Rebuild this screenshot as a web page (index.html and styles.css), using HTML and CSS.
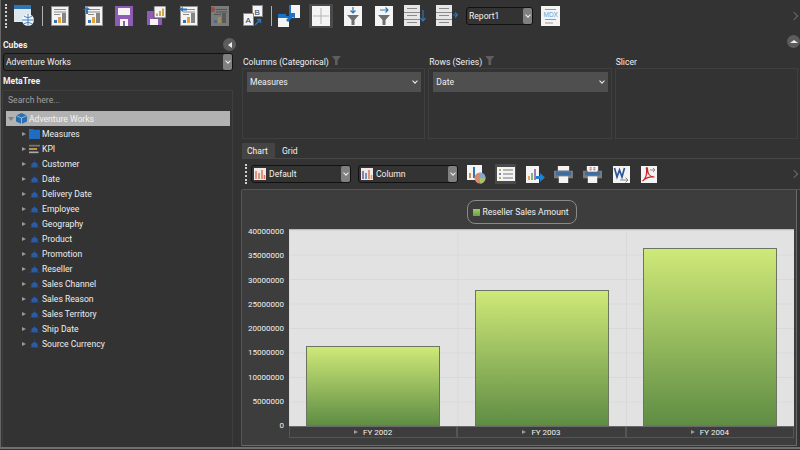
FILE: index.html
```html
<!DOCTYPE html>
<html lang="en">

<head>
    <meta charset="UTF-8">
    <title>Report</title>
    <link rel="stylesheet" href="styles.css">
</head>

<body>
    <svg class="defs" width="0" height="0">
        <symbol id="report" viewBox="0 0 18 20">
            <rect x=".5" y=".5" width="17" height="19" fill="#f4f4f4" stroke="#8f8f8f"/>
            <path d="M3 3.500h12M3 6h12M3 8.500h6" stroke="#8a8a8a" fill="none"/>
            <rect x="3" y="14" width="3" height="3" fill="#2f74b5"/>
            <rect x="7" y="11" width="3" height="6" fill="#e8a33c"/>
            <rect x="11" y="7" width="4" height="10" fill="#858585"/>
        </symbol>
        <symbol id="dim" viewBox="0 0 14 12">
            <path d="M0 10.500h14M7 0v4" stroke="#24426f" fill="none"/>
            <path d="M7 3l4 3v4H3V6z" fill="#2d5ba3"/>
        </symbol>
        <symbol id="funnel" viewBox="0 0 18 20">
            <path d="M3 9h12l-4.500 5v5h-3v-5z" fill="#6f6f6f"/>
        </symbol>
        <symbol id="rows" viewBox="0 0 16 21">
            <rect width="16" height="21" fill="#e6e6e6"/>
            <path d="M0 7.500h16M0 14.500h16M3 3.500h10M3 10.500h10M3 17.500h10" stroke="#8a8a8a" fill="none"/>
        </symbol>
        <symbol id="printer" viewBox="0 0 20 18">
            <rect x="4" width="12" height="5" fill="#f4f4f4"/>
            <rect y="5" width="20" height="8" fill="#7d7d7d"/>
            <rect x="2" y="6" width="16" height="4" fill="#3f6d9c"/>
            <rect x="5" y="11" width="10" height="7" fill="#f4f4f4"/>
        </symbol>
    </svg>

    <div class="app">
        <div class="toolbar">
            <span class="grip"></span>
            <button class="tool tool-first">
                <svg width="20" height="21" viewBox="0 0 20 21">
                    <rect width="17" height="17" fill="#dfe7ef"/>
                    <rect width="17" height="4" fill="#2f74b5"/>
                    <circle cx="14" cy="15" r="6" fill="#f4f6f8"/>
                    <path d="M8 15h12M14 9v12M10 11c3 2 5 2 8 0M10 19c3-2 5-2 8 0" stroke="#3f84c5" fill="none"/>
                </svg>
            </button>
            <span class="tool-sep"></span>
            <button class="tool"><svg width="18" height="20"><use href="#report"/></svg></button>
            <button class="tool">
                <svg width="20" height="20" viewBox="0 0 20 20">
                    <use href="#report" x="2" width="18" height="20"/>
                    <path d="M0 4l4-3 4 3H5v4H3V4z" fill="#2f74b5"/>
                </svg>
            </button>
            <button class="tool">
                <svg width="18" height="20" viewBox="0 0 18 20">
                    <path d="M0 0h18v20H0z" fill="#8e5bb5"/>
                    <rect x="3" y="2" width="12" height="7" fill="#f4f4f4"/>
                    <rect x="5" y="13" width="8" height="7" fill="#f4f4f4"/>
                    <rect x="8" y="15" width="2" height="5" fill="#8e5bb5"/>
                </svg>
            </button>
            <button class="tool">
                <svg width="19" height="19" viewBox="0 0 19 19">
                    <path d="M0 5h15v14H0z" fill="#8e5bb5"/>
                    <rect x="3" y="13" width="8" height="6" fill="#f4f4f4"/>
                    <rect x="7" y="0" width="12" height="12" fill="#f4f4f4" stroke="#555"/>
                    <path d="M10 10V7.500M13 10V5M16 10V2.500" stroke="#c9962f" stroke-width="1.700"/>
                </svg>
            </button>
            <button class="tool">
                <svg width="20" height="20" viewBox="0 0 20 20">
                    <use href="#report" x="1" width="18" height="20"/>
                    <path d="M0 3l4-2v1.500h4v2H4V6z" fill="#2f74b5"/>
                </svg>
            </button>
            <button class="tool">
                <svg width="18" height="20" viewBox="0 0 18 20">
                    <rect width="18" height="20" fill="#7b7b7b"/>
                    <path d="M5 3.500h11M5 6h11M3 8.500h7" stroke="#555" fill="none"/>
                    <rect x="3" y="14" width="3" height="3" fill="#4c6a85"/>
                    <rect x="7" y="11" width="3" height="6" fill="#a08a62"/>
                    <rect x="11" y="7" width="4" height="10" fill="#5a5a5a"/>
                    <circle cx="1.500" cy="3.500" r="2.500" fill="#a04a44"/>
                </svg>
            </button>
            <button class="tool tool-28">
                <svg width="20" height="21" viewBox="0 0 20 21">
                    <rect x="9.500" y=".5" width="10" height="11" fill="#f4f4f4" stroke="#888"/>
                    <rect x=".5" y="8.500" width="10" height="12" fill="#f4f4f4" stroke="#888"/>
                    <text x="11.500" y="9.500" class="swap-text">B</text>
                    <text x="2.500" y="18" class="swap-text">A</text>
                    <path d="M12 20l5-5M14 14.500h3.500V18" stroke="#2f74b5" stroke-width="1.500" fill="none"/>
                </svg>
            </button>
            <span class="tool-sep tool-sep-right"></span>
            <button class="tool tool-31">
                <svg width="22" height="22" viewBox="0 0 22 22">
                    <rect x="11" y="0" width="11" height="13" fill="#f4f4f4"/>
                    <rect x="0" y="11" width="11" height="11" fill="#f4f4f4"/>
                    <path d="M0 9h8v2h3V0h2v13H0z" fill="#1c72c4"/>
                    <path d="M8 15l5-5-2-2h6v6l-2-2-5 5z" fill="#1c72c4"/>
                </svg>
            </button>
            <button class="tool tool-active">
                <svg width="18" height="20" viewBox="0 0 18 20">
                    <rect width="18" height="20" fill="#f4f4f4"/>
                    <path d="M9 2v16M1 10h16" stroke="#b5b5b5" fill="none"/>
                </svg>
            </button>
            <button class="tool tool-31">
                <svg width="18" height="20" viewBox="0 0 18 20">
                    <rect width="18" height="20" fill="#f4f4f4"/>
                    <use href="#funnel" width="18" height="20"/>
                    <path d="M9 1v6M6.500 4.500L9 7l2.500-2.500" stroke="#2f74b5" stroke-width="1.200" fill="none"/>
                </svg>
            </button>
            <button class="tool tool-29">
                <svg width="18" height="20" viewBox="0 0 18 20">
                    <rect width="18" height="20" fill="#f4f4f4"/>
                    <use href="#funnel" width="18" height="20"/>
                    <path d="M5 4h8M10.500 1.500L13 4l-2.500 2.500" stroke="#2f74b5" stroke-width="1.200" fill="none"/>
                </svg>
            </button>
            <button class="tool">
                <svg width="22" height="21" viewBox="0 0 22 21">
                    <use href="#rows" width="16" height="21"/>
                    <path d="M19 5v11M16.500 13l2.500 3 2.500-3" stroke="#2f74b5" stroke-width="1.200" fill="none"/>
                </svg>
            </button>
            <button class="tool tool-30">
                <svg width="22" height="21" viewBox="0 0 22 21">
                    <use href="#rows" width="16" height="21"/>
                    <path d="M17 10h4.500M19 7.500l2.500 2.500-2.500 2.500" stroke="#2f74b5" stroke-width="1.200" fill="none"/>
                </svg>
            </button>
            <div class="combo combo-report">
                <span class="combo-text">Report1</span>
                <span class="combo-btn"><span class="chev"></span></span>
            </div>
            <button class="tool tool-mdx">
                <svg width="19" height="20" viewBox="0 0 19 20">
                    <rect width="19" height="20" fill="#f4f4f4"/>
                    <text x="2.500" y="10.500" class="mdx-text">MDX</text>
                    <path d="M4 3.500h11M4 13.500h11M4 17h8" stroke="#9a9a9a" fill="none"/>
                </svg>
            </button>
            <span class="more"></span>
        </div>

        <div class="main">
            <aside class="side">
                <div class="side-head">
                    <span class="title">Cubes</span>
                    <span class="round-btn round-btn-left"><span class="tri-left"></span></span>
                </div>
                <div class="combo combo-cube">
                    <span class="combo-text">Adventure Works</span>
                    <span class="combo-btn"><span class="chev"></span></span>
                </div>
                <div class="title meta-title">MetaTree</div>
                <div class="tree-panel">
                    <div class="search">Search here...</div>
                    <div class="tree-root">
                        <span class="tri-open"></span>
                        <svg width="11" height="11" viewBox="0 0 11 11">
                            <path d="M5.500 0L11 2.500V8.500L5.500 11 0 8.500V2.500z" fill="#2c6fb0"/>
                            <path d="M0 2.500l5.500 2.500L11 2.500M5.500 5v6" stroke="#c4d4e4" stroke-width=".7" fill="none"/>
                        </svg>
                        Adventure Works
                    </div>
                    <ul class="tree">
                        <li><span class="tri"></span><svg width="11" height="10" viewBox="0 0 15 12" preserveAspectRatio="none"><path d="M0 0h6v1h9v11H0z" fill="#1f6cc0"/></svg>Measures</li>
                        <li><span class="tri"></span><svg width="11" height="10" viewBox="0 0 15 12" preserveAspectRatio="none"><rect y="1" width="15" height="2" fill="#777"/><rect y="5" width="11" height="2" fill="#d8a650"/><rect y="9" width="13" height="2" fill="#aaa"/></svg>KPI</li>
                        <li><span class="tri"></span><svg width="11" height="10"><use href="#dim"/></svg>Customer</li>
                        <li><span class="tri"></span><svg width="11" height="10"><use href="#dim"/></svg>Date</li>
                        <li><span class="tri"></span><svg width="11" height="10"><use href="#dim"/></svg>Delivery Date</li>
                        <li><span class="tri"></span><svg width="11" height="10"><use href="#dim"/></svg>Employee</li>
                        <li><span class="tri"></span><svg width="11" height="10"><use href="#dim"/></svg>Geography</li>
                        <li><span class="tri"></span><svg width="11" height="10"><use href="#dim"/></svg>Product</li>
                        <li><span class="tri"></span><svg width="11" height="10"><use href="#dim"/></svg>Promotion</li>
                        <li><span class="tri"></span><svg width="11" height="10"><use href="#dim"/></svg>Reseller</li>
                        <li><span class="tri"></span><svg width="11" height="10"><use href="#dim"/></svg>Sales Channel</li>
                        <li><span class="tri"></span><svg width="11" height="10"><use href="#dim"/></svg>Sales Reason</li>
                        <li><span class="tri"></span><svg width="11" height="10"><use href="#dim"/></svg>Sales Territory</li>
                        <li><span class="tri"></span><svg width="11" height="10"><use href="#dim"/></svg>Ship Date</li>
                        <li><span class="tri"></span><svg width="11" height="10"><use href="#dim"/></svg>Source Currency</li>
                    </ul>
                </div>
            </aside>

            <section class="content">
                <div class="content-top">
                    <span class="round-btn"><span class="tri-up"></span></span>
                </div>
                <div class="axes">
                    <div class="axis">
                        <div class="axis-label">Columns (Categorical) <span class="filter"></span></div>
                        <div class="axis-box">
                            <div class="axis-item">Measures<span class="chev"></span></div>
                        </div>
                    </div>
                    <div class="axis">
                        <div class="axis-label">Rows (Series) <span class="filter"></span></div>
                        <div class="axis-box">
                            <div class="axis-item">Date<span class="chev"></span></div>
                        </div>
                    </div>
                    <div class="axis">
                        <div class="axis-label">Slicer</div>
                        <div class="axis-box"></div>
                    </div>
                </div>

                <div class="tabs">
                    <span class="tab tab-active">Chart</span>
                    <span class="tab">Grid</span>
                </div>

                <div class="chart-bar">
                    <span class="grip grip-small"></span>
                    <div class="combo combo-chart">
                        <svg width="12" height="12" viewBox="0 0 12 12"><rect width="12" height="12" fill="#f0e8e4"/><path d="M2 11V3M5 11V5M8 11V2M10.500 11V7" stroke="#d8785a" stroke-width="1.500"/></svg>
                        <span class="combo-text">Default</span>
                        <span class="combo-btn"><span class="chev"></span></span>
                    </div>
                    <div class="combo combo-chart">
                        <svg width="12" height="12" viewBox="0 0 12 12"><rect width="12" height="12" fill="#f0e8e4"/><path d="M2 11V3" stroke="#7a4fa0" stroke-width="1.500"/><path d="M5 11V5" stroke="#3d7cc0" stroke-width="1.500"/><path d="M8 11V2" stroke="#d8785a" stroke-width="1.500"/><path d="M10.500 11V7" stroke="#e0a040" stroke-width="1.500"/></svg>
                        <span class="combo-text">Column</span>
                        <span class="combo-btn"><span class="chev"></span></span>
                    </div>
                    <div class="chart-tools">
                        <button class="chart-tool tool-18">
                            <svg width="19" height="19" viewBox="0 0 19 19">
                                <rect width="15" height="15" fill="#f4f4f4"/>
                                <path d="M3 13V8" stroke="#e09030" stroke-width="2"/>
                                <path d="M7 13V2" stroke="#2f74b5" stroke-width="2"/>
                                <circle cx="13" cy="13" r="5.500" fill="#d88a70"/>
                                <path d="M13 13V7.500A5.500 5.500 0 0 1 18.500 13z" fill="#7aa8d8"/>
                                <path d="M13 13h5.500A5.500 5.500 0 0 1 13 18.500z" fill="#a8c070"/>
                            </svg>
                        </button>
                        <button class="chart-tool chart-tool-active">
                            <svg width="18" height="14" viewBox="0 0 18 14">
                                <rect width="18" height="14" fill="#f4f4f4"/>
                                <path d="M6 3h10M6 7h10M6 11h10" stroke="#777" stroke-width="1.200"/>
                                <rect x="2" y="2" width="2" height="2" fill="#a8c050"/>
                                <rect x="2" y="6" width="2" height="2" fill="#a06ab0"/>
                                <rect x="2" y="10" width="2" height="2" fill="#a8c050"/>
                            </svg>
                        </button>
                        <button class="chart-tool tool-18">
                            <svg width="19" height="17" viewBox="0 0 19 17">
                                <rect width="13" height="17" fill="#f4f4f4"/>
                                <path d="M3 14V10" stroke="#e09030" stroke-width="1.500"/>
                                <path d="M6 14V7" stroke="#60a040" stroke-width="1.500"/>
                                <path d="M9 14V3" stroke="#8a4fa8" stroke-width="1.500"/>
                                <path d="M10 10h4V7l5 4.500-5 4.500v-3h-4z" fill="#1c82d4"/>
                            </svg>
                        </button>
                        <button class="chart-tool"><svg width="19" height="17"><use href="#printer"/></svg></button>
                        <button class="chart-tool">
                            <svg width="19" height="17" viewBox="0 0 20 18">
                                <use href="#printer" width="20" height="18"/>
                                <rect x="5" width="10" height="6" fill="#f4f4f4"/>
                                <path d="M7 2h2M11 2h2M7 4h2M11 4h2" stroke="#d03030" fill="none"/>
                            </svg>
                        </button>
                        <button class="chart-tool chart-tool-export">
                            <svg width="17" height="17" viewBox="0 0 17 17">
                                <rect width="17" height="17" fill="#f4f4f4"/>
                                <path d="M1.500 2l2.500 9 2.500-7 2.500 7 2.500-9" stroke="#2a5699" stroke-width="1.700" fill="none"/>
                                <path d="M7 14h8M12.500 11.500L15 14l-2.500 2.500" stroke="#888" fill="none"/>
                            </svg>
                        </button>
                        <button class="chart-tool chart-tool-export">
                            <svg width="16" height="17" viewBox="0 0 16 17">
                                <rect width="16" height="17" fill="#f4f4f4"/>
                                <path d="M1.500 15c3-2 5-7 4-12-.5-2 1-2 1 0 0 5 3 8 7 8-4-.5-9 1-12 4z" stroke="#cc2222" stroke-width="1.200" fill="none"/>
                                <path d="M9 4h5M12 2l2 2-2 2" stroke="#888" fill="none"/>
                            </svg>
                        </button>
                    </div>
                    <span class="more"></span>
                </div>

                <div class="chart">
                    <div class="legend-row">
                        <div class="legend"><span class="swatch"></span>Reseller Sales Amount</div>
                    </div>
                    <div class="plot-wrap">
                        <div class="y-axis">
                            <span>40000000</span>
                            <span>35000000</span>
                            <span>30000000</span>
                            <span>25000000</span>
                            <span>20000000</span>
                            <span>15000000</span>
                            <span>10000000</span>
                            <span>5000000</span>
                            <span>0</span>
                        </div>
                        <div class="plot-col">
                            <div class="plot">
                                <div class="bar-cell"><div class="bar" style="height: 40.900%"></div></div>
                                <div class="bar-cell"><div class="bar" style="height: 69.400%"></div></div>
                                <div class="bar-cell"><div class="bar" style="height: 90.800%"></div></div>
                            </div>
                            <div class="x-axis">
                                <span class="x-cell"><span class="tri tri-x"></span>FY 2002</span>
                                <span class="x-cell"><span class="tri tri-x"></span>FY 2003</span>
                                <span class="x-cell"><span class="tri tri-x"></span>FY 2004</span>
                            </div>
                        </div>
                    </div>
                </div>
            </section>
        </div>
    </div>
</body>

</html>
```

FILE: styles.css
```css
* {
    box-sizing: border-box;
}

body {
    margin: 0;
    width: 800px;
    height: 450px;
    overflow: hidden;
    font-family: Roboto, "Open Sans", sans-serif;
    font-size: 8.600px;
    color: #f1f1f1;
    background-color: #333333;
}

ul {
    margin: 0;
    padding: 0;
    list-style: none;
}

button {
    padding: 0;
    border: none;
    background: none;
}

svg {
    display: block;
    flex: none;
}

.defs {
    position: absolute;
}

.app {
    height: 449px;
    border-left: 1px solid #666666;
    border-bottom: 2px solid #707070;
    display: flex;
    flex-direction: column;
}

/* top toolbar */
.toolbar {
    height: 31px;
    padding-left: 4px;
    display: flex;
    align-items: center;
    flex: none;
}

.grip {
    width: 2px;
    height: 24px;
    border-left: 2px dotted #cfcfcf;
}

.tool {
    width: 32px;
    height: 24px;
    display: flex;
    align-items: center;
    flex: none;
}

.tool-first {
    width: 28px;
    margin-left: 7px;
}

.tool-28 {
    width: 28px;
}

.tool-29 {
    width: 29px;
}

.tool-30 {
    width: 30px;
}

.tool-31 {
    width: 31px;
}

.tool-sep {
    width: 1px;
    height: 20px;
    margin-right: 8px;
    background-color: #b0b0b0;
}

.tool-sep-right {
    margin-right: 6px;
}

.tool-active {
    width: 24px;
    margin-right: 11px;
    justify-content: center;
    background-color: #4a4a4a;
}

.swap-text {
    font-size: 8px;
    fill: #333333;
}

.mdx-text {
    font-size: 6.500px;
    fill: #6a9fd8;
}

.tool-mdx {
    width: 27px;
    margin-left: 8px;
}

.more {
    width: 6px;
    height: 6px;
    margin-left: auto;
    margin-right: 3px;
    border-top: 1px solid #6a6a6a;
    border-right: 1px solid #6a6a6a;
    transform: rotate(45deg);
}

/* combos */
.combo {
    height: 18px;
    padding-left: 2px;
    border: 1px solid #111111;
    border-radius: 3px;
    display: flex;
    align-items: center;
    gap: 3px;
    background-color: #333333;
}

.combo-text {
    flex: 1;
}

.combo-btn {
    width: 9px;
    height: 16px;
    border-radius: 2px;
    background-color: #808080;
    display: flex;
    align-items: center;
    justify-content: center;
}

.chev {
    width: 4px;
    height: 4px;
    margin-top: -2px;
    border-right: 1.500px solid #f0f0f0;
    border-bottom: 1.500px solid #f0f0f0;
    transform: rotate(45deg);
}

.combo-report {
    width: 67px;
    flex: none;
}

.combo-cube {
    margin-left: 2px;
    width: 230px;
}

.combo-chart {
    width: 100px;
    flex: none;
}

/* main */
.main {
    flex: 1;
    min-height: 0;
    display: flex;
}

.side {
    width: 233px;
    display: flex;
    flex-direction: column;
    flex: none;
}

.title {
    font-weight: 700;
}

.side-head {
    height: 22px;
    padding: 7px 1px 2px 2px;
    display: flex;
    align-items: center;
    justify-content: space-between;
}

.round-btn {
    width: 13px;
    height: 13px;
    border-radius: 50%;
    background-color: #5c5c5c;
    display: flex;
    align-items: center;
    justify-content: center;
}

.round-btn-left {
    margin-right: -3px;
}

.tri-left {
    border: 3px solid transparent;
    border-left: none;
    border-right: 4px solid #eeeeee;
}

.tri-up {
    border: 4px solid transparent;
    border-top: none;
    border-bottom: 3px solid #eeeeee;
}

.meta-title {
    height: 19px;
    line-height: 20px;
    padding-left: 2px;
}

.tree-panel {
    flex: 1;
    min-height: 0;
    margin: 0 1px;
    padding: 1px 2px 0 3px;
    border: 1px solid #3e3e3e;
    border-bottom: none;
}

.search {
    height: 16px;
    line-height: 16px;
    padding-left: 2px;
    color: #a0a0a0;
}

.tree-root {
    height: 15px;
    margin-top: 3px;
    padding-left: 2px;
    display: flex;
    align-items: center;
    gap: 2px;
    color: #f4f4f4;
    background-color: #b2b2b2;
}

.tri-open {
    width: 0;
    height: 0;
    border: 3px solid transparent;
    border-top: 4px solid #808080;
    border-bottom: none;
}

.tree {
    padding-left: 16px;
}

.tree li {
    height: 15px;
    display: flex;
    align-items: center;
    color: #eeeeee;
}

.tree li svg {
    margin-right: 2px;
}

.tri {
    width: 0;
    height: 0;
    margin-right: 3px;
    border: 2.500px solid transparent;
    border-left: 4px solid #9a9a9a;
    border-right: none;
}

/* content */
.content {
    flex: 1;
    min-width: 0;
    padding-left: 8px;
    display: flex;
    flex-direction: column;
}

.content-top {
    height: 17px;
    padding-top: 4px;
    display: flex;
    justify-content: flex-end;
}

.axes {
    height: 91px;
    padding-right: 2px;
    display: grid;
    grid-template-columns: repeat(3, 1fr);
    gap: 3px;
}

.axis {
    display: flex;
    flex-direction: column;
}

.axis-label {
    height: 20px;
    line-height: 28px;
    padding-left: 1px;
    white-space: nowrap;
}

.filter {
    display: inline-block;
    width: 9px;
    height: 9px;
    margin-left: 1px;
    background-color: #5e5e5e;
    clip-path: polygon(0 0, 100% 0, 65% 45%, 65% 100%, 35% 100%, 35% 45%);
}

.axis-box {
    flex: 1;
    padding: 3px 3px 0 4px;
    border: 1px solid #3f3f3f;
}

.axis-item {
    height: 20px;
    padding: 0 4px 0 3px;
    display: flex;
    align-items: center;
    justify-content: space-between;
    background-color: #4f4f4f;
}

.tabs {
    height: 17px;
    margin-top: 3px;
    display: flex;
    border-bottom: 1px solid #474747;
    flex: none;
}

.tab {
    padding: 0 5px;
    margin: 1px 2px 0 0;
    line-height: 16px;
}

.tab-active {
    background-color: #444444;
    width: 33px;
}

.chart-bar {
    height: 31px;
    padding-left: 3px;
    display: flex;
    align-items: center;
    gap: 7px;
    border-bottom: 1px solid #555555;
    flex: none;
}

.grip-small {
    height: 20px;
    margin-right: -3px;
}

.chart-tools {
    margin-left: 2px;
    display: flex;
    align-items: center;
    gap: 10px;
}

.chart-tool {
    width: 19px;
    height: 20px;
    display: flex;
    align-items: center;
    flex: none;
}

.tool-18 {
    width: 18px;
}

.chart-tool-active {
    width: 21px;
    justify-content: center;
    background-color: #4a4a4a;
}

.chart-tool-export {
    width: 17px;
    margin-left: 1px;
}

.chart {
    flex: 1;
    min-height: 0;
    margin: 0 3px 1px -1px;
    padding: 10px 2px 0 0;
    border-right: 1px solid #6a6a6a;
    border-left: 1px solid #555555;
    border-bottom: 1px solid #6a6a6a;
    background-color: #3d3d3d;
    display: flex;
    flex-direction: column;
}

.legend-row {
    display: flex;
    justify-content: center;
    padding-left: 7px;
}

.legend {
    height: 24px;
    width: 110px;
    padding-left: 5px;
    border: 1px solid #8a8a8a;
    border-radius: 8px;
    display: flex;
    align-items: center;
    gap: 3px;
}

.swatch {
    width: 7px;
    height: 7px;
    background: linear-gradient(#9fce63, #6e9e44);
}

.plot-wrap {
    margin-top: 5px;
    display: flex;
    font-size: 8px;
}

.y-axis {
    width: 42px;
    height: 206px;
    margin-top: -3px;
    display: flex;
    flex-direction: column;
    justify-content: space-between;
    align-items: flex-end;
    line-height: 12px;
}

.plot-col {
    flex: 1;
    margin-left: 5px;
}

.plot {
    height: 198px;
    padding: 0 17px;
    display: grid;
    grid-template-columns: repeat(3, 134px);
    justify-content: space-between;
    background-color: #e2e2e2;
    background-image: linear-gradient(#d9d9d9 1px, transparent 1px), linear-gradient(90deg, #d9d9d9 1px, transparent 1px);
    background-size: 100% 24.500px, 168.500px 100%;
    border-top: 1px solid #bbbbbb;
    border-bottom: 1px solid #6a6a6a;
}

.bar-cell {
    display: flex;
    align-items: flex-end;
}

.bar {
    width: 100%;
    border: 1px solid #6b7560;
    background: linear-gradient(#cfe978, #5f8d44);
}

.x-axis {
    height: 11px;
    display: grid;
    grid-template-columns: repeat(3, 1fr);
    border-bottom: 1px solid #555555;
}

.x-cell {
    display: flex;
    align-items: center;
    justify-content: center;
    border-left: 1px solid #555555;
    border-right: 1px solid #555555;
}

.tri-x {
    margin-right: 5px;
}
```
